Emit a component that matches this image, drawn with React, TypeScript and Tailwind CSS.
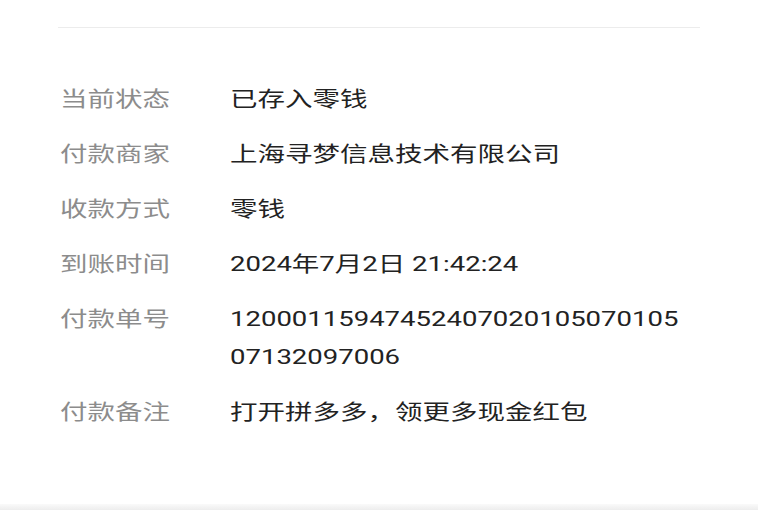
import React from "react";

const rows: { label: string; value: string; wrap?: boolean }[] = [
  { label: "当前状态", value: "已存入零钱" },
  { label: "付款商家", value: "上海寻梦信息技术有限公司" },
  { label: "收款方式", value: "零钱" },
  { label: "到账时间", value: "2024年7月2日 21:42:24" },
  { label: "付款单号", value: "1200011594745240702010507010507132097006", wrap: true },
  { label: "付款备注", value: "打开拼多多，领更多现金红包" },
];

export default function App() {
  return (
    <div
      className="w-full h-[510px] bg-white flex flex-col overflow-hidden"
      style={{ fontFamily: 'Roboto, "Noto Sans CJK SC", sans-serif' }}
    >
      <div className="pt-[27px] pl-[58px] pr-[68px]">
        <div className="h-[1px] bg-[#ececec]" />
      </div>
      <div className="flex flex-col gap-[17px] pt-[52px] pl-[60px]">
        {rows.map((r) => (
          <div key={r.label} className="flex">
            <div className="w-[170px] shrink-0">
              <div className="inline-block origin-left scale-x-[1.31] text-[21px] leading-[38px] text-[#8c8c8c]">
                {r.label}
              </div>
            </div>
            <div
              className={
                "origin-left scale-x-[1.31] text-[21px] leading-[38px] text-[#222222] " +
                (r.wrap ? "w-[348px] break-all" : "whitespace-nowrap")
              }
            >
              {r.value}
            </div>
          </div>
        ))}
      </div>
      <div className="flex-1" />
      <div className="h-[6px] mr-[10px] bg-gradient-to-b from-[#fafafa] to-[#ededed]" />
    </div>
  );
}
